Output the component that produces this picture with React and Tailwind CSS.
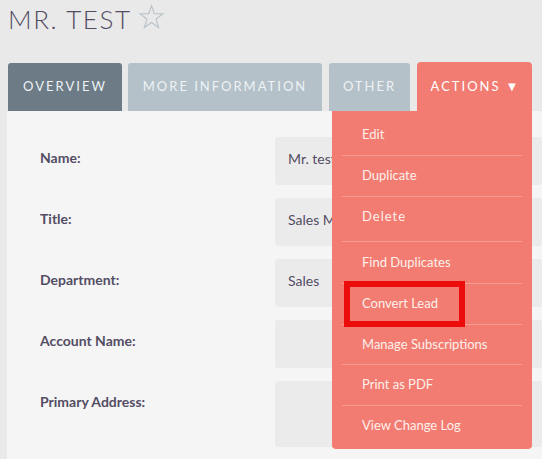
import React from 'react';

const fields = [
  { label: 'Name:', value: 'Mr. test', h: 'h-[48px]' },
  { label: 'Title:', value: 'Sales Manager', h: 'h-[48px]' },
  { label: 'Department:', value: 'Sales', h: 'h-[48px]' },
  { label: 'Account Name:', value: '', h: 'h-[48px]' },
  { label: 'Primary Address:', value: '', h: 'h-[66px]' },
];

const actions = [
  { label: 'Edit', h: 'h-[41px]' },
  { label: 'Duplicate', h: 'h-[40px]' },
  { label: 'Delete', h: 'h-[44px] pb-1 tracking-[1px]' },
  { label: 'Find Duplicates', h: 'h-[41px]' },
  { label: 'Convert Lead', h: 'h-[40px]', marked: true },
  { label: 'Manage Subscriptions', h: 'h-[39px]' },
  { label: 'Print as PDF', h: 'h-[40px]' },
  { label: 'View Change Log', h: 'h-[40px]' },
];

const StarIcon = () => (
  <svg width="27" height="26" viewBox="0 0 24 24" fill="none" stroke="#b9c3c9" strokeWidth="1.1" strokeLinejoin="miter">
    <polygon points="12,1.5 14.6,8.9 22.5,9.1 16.2,13.9 18.5,21.6 12,17 5.5,21.6 7.8,13.9 1.5,9.1 9.4,8.9" />
  </svg>
);

// dropdown hangs under the Actions tab, over the detail rows
const ActionsMenu = () => (
  <div className="absolute right-0 top-full w-[200px] bg-[#f27c71] rounded-b-[4px] pt-[3px] pb-[3px] z-10 tracking-normal">
    {actions.map((a, i) => (
      <div key={a.label}>
        {i > 0 && <div className="mx-[10px] h-px bg-[#f59c93]" />}
        <div className={`flex items-center pl-[30px] text-[13px] text-[#fdf0ec] whitespace-nowrap ${a.h}`}>
          {a.marked ? (
            <span className="-ml-[18px] border-[6px] border-[#ec0c0c] h-[46px] w-[121px] flex items-center pl-[12px]">
              {a.label}
            </span>
          ) : (
            a.label
          )}
        </div>
      </div>
    ))}
  </div>
);

export default function App() {
  return (
    <div className="w-[542px] h-[459px] overflow-hidden bg-[#e9e9e9] text-[#534d64]" style={{ fontFamily: 'Lato, "Open Sans", sans-serif' }}>
      <div className="flex items-center h-[36px] pl-[8px] pt-[1px]">
        <h1 className="text-[26px] font-light tracking-[1.6px] leading-none">MR. TEST</h1>
        <span className="ml-[6px] -mt-[3px]"><StarIcon /></span>
      </div>

      <div className="flex items-end gap-[6px] pl-[8px] mt-[26px] text-[13px] tracking-[2px]">
        <div className="w-[114px] h-[48px] rounded-t-[3px] bg-[#6c7b86] text-[#eef2f4] flex items-center justify-center">OVERVIEW</div>
        <div className="w-[194px] h-[48px] rounded-t-[3px] bg-[#b4c1c9] text-[#eef2f4] flex items-center justify-center">MORE INFORMATION</div>
        <div className="w-[81px] h-[48px] rounded-t-[3px] bg-[#b4c1c9] text-[#eef2f4] flex items-center justify-center ml-[1px]">OTHER</div>
        <div className="relative w-[115px] h-[49px] rounded-t-[4px] bg-[#f27c71] text-white flex items-center justify-center ml-[1px]">
          <span>ACTIONS</span>
          <span className="ml-[5px] text-[13px] tracking-normal">▼</span>
          <ActionsMenu />
        </div>
      </div>

      <div className="ml-[7px] h-[400px] bg-[#f5f5f5] pt-[26px] flex flex-col gap-[13px]">
        {fields.map((f) => (
          <div key={f.label} className="flex">
            <div className="w-[268px] pl-[33px] pt-[12px] text-[14px] font-bold leading-[18px]">{f.label}</div>
            <div className={`flex-1 rounded-[3px] bg-[#ebebeb] pl-[13px] pt-[13px] text-[14px] leading-[18px] whitespace-nowrap ${f.h}`}>
              {f.value}
            </div>
          </div>
        ))}
      </div>
    </div>
  );
}
